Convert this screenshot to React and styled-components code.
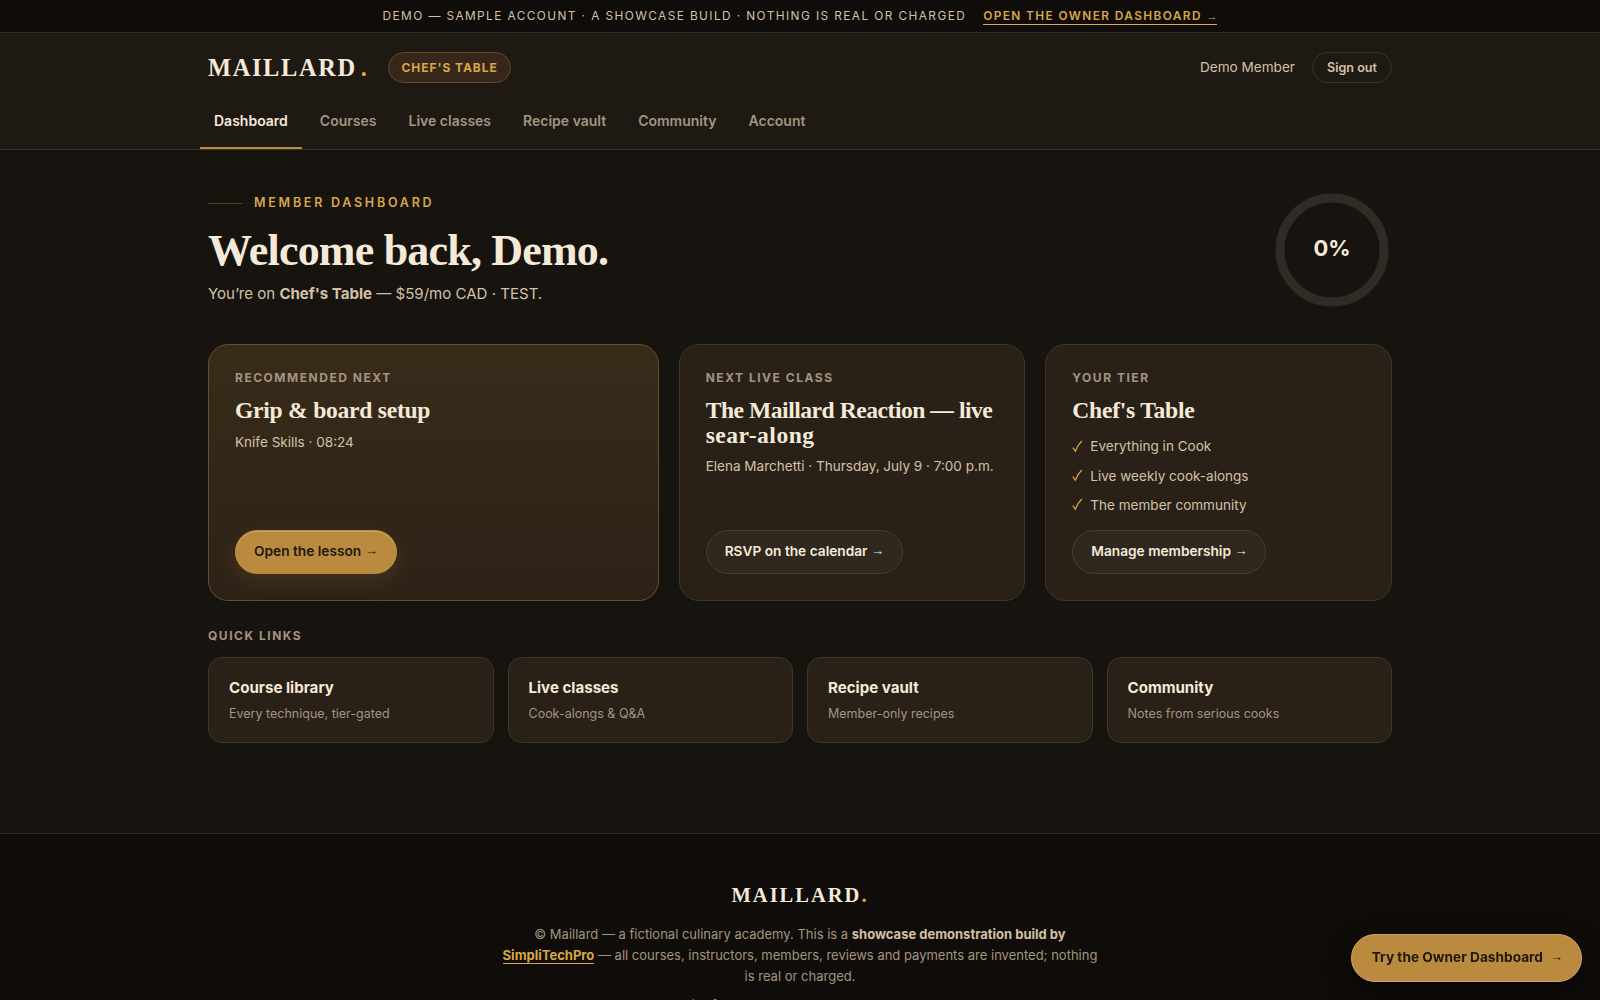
import React from 'react'
import styled, { createGlobalStyle, css } from 'styled-components'

const navItems = ['Dashboard', 'Courses', 'Live classes', 'Recipe vault', 'Community', 'Account']

const perks = ['Everything in Cook', 'Live weekly cook-alongs', 'The member community']

const quickLinks = [
    { title: 'Course library', text: 'Every technique, tier-gated' },
    { title: 'Live classes', text: 'Cook-alongs & Q&A' },
    { title: 'Recipe vault', text: 'Member-only recipes' },
    { title: 'Community', text: 'Notes from serious cooks' },
]

function App() {
    return (
        <>
            <GlobalStyle />
            <Page>
                <DemoBar>
                    <span>Demo — sample account · a showcase build · nothing is real or charged</span>
                    <a href="#owner">Open the owner dashboard <Arrow $small>→</Arrow></a>
                </DemoBar>

                <Header>
                    <Container>
                        <TopRow>
                            <Brand>Maillard<i>.</i></Brand>
                            <TierBadge>Chef's Table</TierBadge>
                            <UserName>Demo Member</UserName>
                            <SignOut>Sign out</SignOut>
                        </TopRow>
                        <Nav>
                            {navItems.map((item, index) => (
                                <NavItem key={item} href="#" $active={index === 0}>{item}</NavItem>
                            ))}
                        </Nav>
                    </Container>
                </Header>

                <Main>
                    <Hero>
                        <div>
                            <Eyebrow>Member dashboard</Eyebrow>
                            <Welcome>Welcome back, Demo.</Welcome>
                            <Plan>You’re on <strong>Chef's Table</strong> — $59/mo CAD · TEST.</Plan>
                        </div>
                        <ProgressRing value={0} />
                    </Hero>

                    <Cards>
                        <Card $featured>
                            <Label>Recommended next</Label>
                            <CardTitle>Grip &amp; board setup</CardTitle>
                            <CardText>Knife Skills · 08:24</CardText>
                            <Button $primary>Open the lesson <Arrow>→</Arrow></Button>
                        </Card>
                        <Card>
                            <Label>Next live class</Label>
                            <CardTitle $tight>The Maillard Reaction — live <span>sear-along</span></CardTitle>
                            <CardText>Elena Marchetti · Thursday, July 9 · 7:00 p.m.</CardText>
                            <Button>RSVP on the calendar <Arrow>→</Arrow></Button>
                        </Card>
                        <Card>
                            <Label>Your tier</Label>
                            <CardTitle>Chef's Table</CardTitle>
                            <Perks>
                                {perks.map((perk) => (
                                    <li key={perk}><CheckMark />{perk}</li>
                                ))}
                            </Perks>
                            <Button>Manage membership <Arrow>→</Arrow></Button>
                        </Card>
                    </Cards>

                    <QuickLabel>Quick links</QuickLabel>
                    <QuickGrid>
                        {quickLinks.map((link) => (
                            <QuickCard key={link.title} href="#">
                                <strong>{link.title}</strong>
                                <span>{link.text}</span>
                            </QuickCard>
                        ))}
                    </QuickGrid>
                </Main>

                <Footer>
                    <Brand $small>Maillard<i>.</i></Brand>
                    <p>
                        © Maillard — a fictional culinary academy. This is a <strong>showcase demonstration build by <a href="#studio">SimpliTechPro</a></strong> — all courses, instructors, members, reviews and payments are invented; nothing is real or charged.
                    </p>
                    <p>Stills from our summer menu and demo</p>
                </Footer>

                <FloatingButton href="#owner">
                    Try the Owner Dashboard <Arrow>→</Arrow>
                </FloatingButton>
            </Page>
        </>
    )
}

function ProgressRing({ value }) {
    const length = 2 * Math.PI * 52
    return (
        <Ring>
            <svg width="120" height="120" viewBox="0 0 120 120" fill="none" strokeWidth="9">
                <circle cx="60" cy="60" r="52" stroke="#2f2c26" />
                {value > 0 && (
                    <circle
                        cx="60" cy="60" r="52"
                        stroke="#ba8b3e"
                        strokeDasharray={`${(length * value) / 100} ${length}`}
                        transform="rotate(-90 60 60)"
                    />
                )}
            </svg>
            <b>{value}%</b>
        </Ring>
    )
}

function CheckMark() {
    return (
        <svg width="11" height="13" viewBox="0 0 11 13" fill="none" stroke="#d9a648" strokeWidth="1.2">
            <path d="M0.8 7.6 L3.4 11.2 C5 7 7 3.6 9.8 1" />
        </svg>
    )
}

const GlobalStyle = createGlobalStyle`
    * {
        box-sizing: border-box;
    }
    body {
        margin: 0;
        background: #17130f;
        color: #f5ead8;
        font-family: Inter, "Liberation Sans", sans-serif;
        overflow: hidden;
    }
    a {
        color: inherit;
        text-decoration: none;
    }
    h1, h2, p, ul {
        margin: 0;
        padding: 0;
    }
`

const Page = styled.div`
    height: 1000px;
    overflow: hidden;
`

const Container = styled.div`
    width: 1184px;
    margin: 0 auto;
`

const Arrow = styled.span`
    font-family: "Liberation Sans", sans-serif;
    font-size: ${props => (props.$small ? '11px' : '13px')};
    line-height: 0;
    letter-spacing: 0;
    vertical-align: ${props => (props.$small ? '0' : '1px')};
`

const DemoBar = styled.div`
    display: flex;
    align-items: center;
    justify-content: center;
    gap: 17px;
    height: 33px;
    border-bottom: 1px solid #2f2b26;
    background: #0f0c09;
    color: #d3c1a7;
    font-size: 11.84px;
    letter-spacing: 1.42px;
    line-height: 18px;
    text-transform: uppercase;
    white-space: nowrap;

    a {
        padding-top: 1px;
        color: #d9a648;
        font-weight: 600;
        line-height: 15px;
        border-bottom: 1px solid #d9a648;
    }
`

const Header = styled.header`
    height: 117px;
    border-bottom: 1px solid #3b342b;
    background: #1f1914;
`

const TopRow = styled.div`
    display: flex;
    align-items: center;
    height: 69px;
`

const Brand = styled.div`
    padding-top: ${props => (props.$small ? '0' : '2px')};
    color: #f5ead8;
    font-family: "Liberation Serif", serif;
    font-size: ${props => (props.$small ? '20.5px' : '24.4px')};
    font-weight: 700;
    line-height: 1;
    letter-spacing: ${props => (props.$small ? '2px' : '1.65px')};
    text-transform: uppercase;

    i {
        margin-left: ${props => (props.$small ? '0' : '4px')};
        color: #d9a648;
        font-style: normal;
    }
`

const TierBadge = styled.span`
    height: 31px;
    margin-left: 20px;
    padding: 0 12px;
    border: 1px solid #65492a;
    border-radius: 16px;
    background: #36271a;
    color: #d9a648;
    font-size: 12px;
    font-weight: 700;
    letter-spacing: 0.95px;
    line-height: 29px;
    text-transform: uppercase;
`

const UserName = styled.span`
    margin-left: auto;
    padding-bottom: 2px;
    color: #d3c1a7;
    font-size: 13.6px;
`

const SignOut = styled.button`
    width: 80px;
    height: 31px;
    margin-left: 17px;
    padding: 0;
    border: 1px solid #3a342b;
    border-radius: 16px;
    background: transparent;
    color: #d3c1a7;
    font: 600 12.6px Inter, sans-serif;
`

const Nav = styled.nav`
    display: flex;
    gap: 4px;
    margin-left: -8px;
`

const NavItem = styled.a`
    height: 47px;
    padding: 0 14px;
    border-bottom: 2px solid ${props => (props.$active ? '#ba8b3e' : 'transparent')};
    color: ${props => (props.$active ? '#f5ead8' : '#a39480')};
    font-size: 14px;
    font-weight: 600;
    line-height: 38px;
`

const Main = styled(Container).attrs({ as: 'main' })`
    height: 683px;
    padding-top: 40px;
`

const Hero = styled.section`
    display: flex;
    justify-content: space-between;
    height: 154px;
`

const Eyebrow = styled.div`
    display: flex;
    align-items: center;
    gap: 12px;
    padding-top: 4px;
    color: #d9a648;
    font-size: 12.5px;
    font-weight: 600;
    letter-spacing: 2.75px;
    line-height: 18px;
    text-transform: uppercase;

    &::before {
        content: '';
        width: 34px;
        height: 1px;
        background: #4e4126;
    }
`

const Welcome = styled.h1`
    margin-top: 14px;
    color: #f5ead8;
    font: 700 44px/50px "Liberation Serif", serif;
    letter-spacing: -0.8px;
`

const Plan = styled.p`
    margin-top: 6px;
    color: #d3c1a7;
    font-size: 15.05px;
    line-height: 24px;
`

const Ring = styled.div`
    display: grid;
    width: 120px;
    height: 120px;

    > * {
        grid-area: 1 / 1;
    }
    b {
        place-self: center;
        padding-bottom: 5px;
        font-size: 22px;
        font-weight: 700;
        line-height: 26px;
    }
`

const Cards = styled.section`
    display: grid;
    grid-template-columns: 1.3fr 1fr 1fr;
    gap: 20px;
    height: 257px;
`

const Card = styled.article`
    display: flex;
    flex-direction: column;
    align-items: flex-start;
    padding: 26px;
    border: 1px solid ${props => (props.$featured ? '#64502c' : '#3d3629')};
    border-radius: 20px;
    background: ${props => (props.$featured ? 'linear-gradient(180deg, #382b1a, #2d2217)' : '#292117')};
`

const Label = styled.div`
    color: #a39480;
    font-size: 12px;
    font-weight: 700;
    letter-spacing: 1.52px;
    line-height: 14px;
    text-transform: uppercase;
`

const CardTitle = styled.h2`
    margin-top: 13px;
    color: #f5ead8;
    font: 700 23.6px/24.6px "Liberation Serif", serif;
    letter-spacing: ${props => (props.$tight ? '-0.48px' : '-0.26px')};

    span {
        display: block;
        letter-spacing: 0.5px;
    }
`

const CardText = styled.p`
    margin-top: 8px;
    color: #d3c1a7;
    font-size: 13.54px;
    line-height: 22px;
    white-space: nowrap;
`

const buttonColors = {
    primary: css`
        border-color: #ba8b3e;
        background: #ba8b3e;
        color: #21180d;
        box-shadow: 0 8px 22px rgba(186, 139, 62, 0.16), inset 0 1px 0 rgba(255, 255, 255, 0.25);
    `,
    ghost: css`
        border-color: #453d31;
        background: #30281e;
        color: #f5ead8;
    `,
}

const Button = styled.button`
    height: 44px;
    margin-top: auto;
    padding: 0 18px 3px;
    border: 1px solid;
    border-radius: 22px;
    font: 600 13.7px Inter, sans-serif;
    white-space: nowrap;
    ${props => (props.$primary ? buttonColors.primary : buttonColors.ghost)}
`

const Perks = styled.ul`
    margin-top: 9px;
    list-style: none;

    li {
        display: flex;
        align-items: center;
        gap: 7px;
        height: 29.3px;
        color: #d3c1a7;
        font-size: 13.54px;
        white-space: nowrap;
    }
`

const QuickLabel = styled(Label)`
    margin-top: 28px;
`

const QuickGrid = styled.div`
    display: grid;
    grid-template-columns: repeat(4, 1fr);
    gap: 14px;
    margin-top: 14px;
`

const QuickCard = styled.a`
    display: flex;
    flex-direction: column;
    gap: 4px;
    height: 86px;
    padding: 18px 20px;
    border: 1px solid #3d3629;
    border-radius: 14px;
    background: #292117;

    strong {
        font-size: 15.1px;
        line-height: 24px;
    }
    span {
        color: #a39480;
        font-size: 12.5px;
        line-height: 20px;
    }
`

const Footer = styled.footer`
    display: flex;
    flex-direction: column;
    align-items: center;
    height: 167px;
    padding-top: 51px;
    border-top: 1px solid #2f2b26;
    background: #0f0c09;
    color: #a39480;
    overflow: hidden;

    p {
        width: 600px;
        margin-top: 18px;
        font-size: 13px;
        line-height: 21.1px;
        text-align: center;
    }
    p + p {
        margin-top: 8px;
    }
    strong {
        color: #d3c1a7;
    }
    a {
        color: #d9a648;
        border-bottom: 1px solid #d9a648;
    }
`

const FloatingButton = styled.a`
    position: fixed;
    right: 18px;
    bottom: 18px;
    display: flex;
    gap: 7px;
    height: 48px;
    padding: 0 18px 0 20px;
    border: 1px solid #d1a568;
    border-radius: 24px;
    background: #ba8b3e;
    box-shadow: 0 10px 26px rgba(0, 0, 0, 0.5);
    color: #21180d;
    font-size: 13.7px;
    font-weight: 700;
    line-height: 45px;
    white-space: nowrap;

    ${Arrow} {
        line-height: 43px;
    }
`

export default App
